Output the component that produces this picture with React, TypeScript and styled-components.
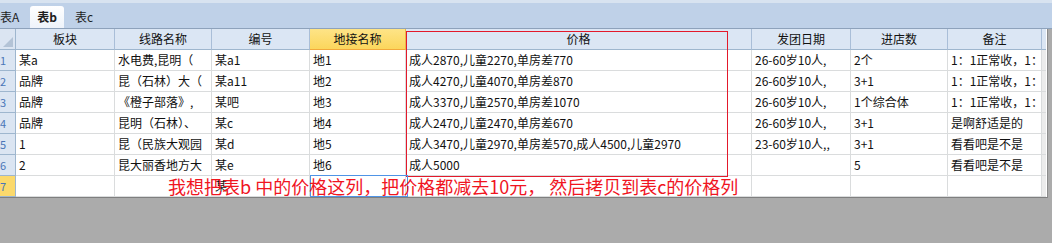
import { FC } from "react";
import styled, { createGlobalStyle } from "styled-components";

const GlobalStyle = createGlobalStyle`
  html, body {
    margin: 0;
    padding: 0;
    background: #ababab;
    font-family: "Noto Sans CJK SC", "Noto Sans", sans-serif;
  }
`;

const colWidths = [99, 97, 98, 96, 346, 99, 97, 94];
const template = `16px ${colWidths.map((w) => `${w}px`).join(" ")} 4px`;

const headers = ["板块", "线路名称", "编号", "地接名称", "价格", "发团日期", "进店数", "备注"];
const selectedCol = 3;
const selectedRow = 6;

const rows: string[][] = [
  ["某a", "水电费,昆明（", "某a1", "地1", "成人2870,儿童2270,单房差770", "26-60岁10人,", "2个", "1：1正常收，1："],
  ["品牌", "昆（石林）大（", "某a11", "地2", "成人4270,儿童4070,单房差870", "26-60岁10人,", "3+1", "1：1正常收，1："],
  ["品牌", "《橙子部落》,", "某吧", "地3", "成人3370,儿童2570,单房差1070", "26-60岁10人,", "1个综合体", "1：1正常收，1："],
  ["品牌", "昆明（石林）、", "某c", "地4", "成人2470,儿童2470,单房差670", "26-60岁10人,", "3+1", "是啊舒适是的"],
  ["1", "昆（民族大观园", "某d", "地5", "成人3470,儿童2970,单房差570,成人4500,儿童2970", "23-60岁10人,,", "3+1", "看看吧是不是"],
  ["2", "昆大丽香地方大", "某e", "地6", "成人5000", "", "5", "看看吧是不是"],
  ["", "", "某", "", "", "", "", ""],
];

const Page = styled.div`
  width: 1052px;
  height: 243px;
  background: #ababab;
  overflow: hidden;
`;

const TabBar = styled.div`
  height: 29px;
  box-sizing: border-box;
  display: flex;
  align-items: flex-end;
  gap: 4px;
  background: #bfd1e8;
  border-top: 3px solid #d8e3f0;
  border-bottom: 1px solid #8ea2bb;
  font-size: 12px;
`;

const Tab = styled.div<{ $active?: boolean }>`
  height: 22px;
  line-height: 22px;
  padding: 0 7px;
  border-radius: 3px 3px 0 0;
  color: #1e1e1e;
  font-weight: ${(p) => (p.$active ? 700 : 400)};
  background: ${(p) => (p.$active ? "linear-gradient(#ffffff, #eef3fa)" : "transparent")};
  &:first-child {
    margin-left: -7px;
  }
`;

const Sheet = styled.div`
  position: relative;
  width: 1047px;
  background: #ffffff;
  border-right: 1px solid #8c8c8c;
  border-bottom: 1px solid #7f7f7f;
  font-size: 12px;
`;

const Row = styled.div`
  display: grid;
  grid-template-columns: ${template};
  height: 21px;
`;

const Corner = styled.div`
  position: relative;
  background: #dbe5f2;
  border-right: 1px solid #9eb6ce;
  border-bottom: 1px solid #9eb6ce;
  &::after {
    content: "";
    position: absolute;
    right: 2px;
    bottom: 2px;
    border-left: 10px solid transparent;
    border-bottom: 10px solid #b3c3d6;
  }
`;

const HeaderCell = styled.div<{ $selected?: boolean }>`
  box-sizing: border-box;
  text-align: center;
  line-height: 20px;
  color: #111;
  white-space: nowrap;
  overflow: hidden;
  background: ${(p) => (p.$selected ? "linear-gradient(#fee487, #fbd65c)" : "#dbe6f4")};
  border-right: 1px solid ${(p) => (p.$selected ? "#e8b64a" : "#a9bed8")};
  border-bottom: 1px solid ${(p) => (p.$selected ? "#f2a93b" : "#9eb6ce")};
`;

const RowHeader = styled.div<{ $selected?: boolean }>`
  box-sizing: border-box;
  line-height: 20px;
  font-size: 11px;
  padding-left: 0;
  color: #4a76b8;
  background: ${(p) => (p.$selected ? "#fbd96c" : "#dbe5f2")};
  border-right: 1px solid #9eb6ce;
  border-bottom: 1px solid #9eb6ce;
`;

const Cell = styled.div`
  box-sizing: border-box;
  padding-left: 3px;
  line-height: 20px;
  color: #111;
  white-space: nowrap;
  overflow: hidden;
  border-right: 1px solid #dadcdd;
  border-bottom: 1px solid #dadcdd;
`;

const Filler = styled.div`
  background: #ececec;
  border-bottom: 1px solid #dadcdd;
`;

const HeaderFiller = styled.div`
  background: #dbe6f4;
  border-bottom: 1px solid #9eb6ce;
`;

const PriceMark = styled.div`
  position: absolute;
  left: 406px;
  top: 2px;
  width: 322px;
  height: 146px;
  box-sizing: border-box;
  border: 1px solid #e3192b;
  pointer-events: none;
`;

const ActiveCell = styled.div`
  position: absolute;
  left: 310px;
  top: 146px;
  width: 98px;
  height: 22px;
  box-sizing: border-box;
  border: 1px solid #4f94e6;
`;

const Note = styled.div`
  position: absolute;
  left: 168px;
  top: 147px;
  font-size: 18px;
  line-height: 20px;
  color: #f0151f;
  white-space: nowrap;
`;

const App: FC = () => {
  return (
    <Page>
      <GlobalStyle />
      <TabBar>
        <Tab>表A</Tab>
        <Tab $active>表b</Tab>
        <Tab>表c</Tab>
      </TabBar>
      <Sheet>
        <Row>
          <Corner />
          {headers.map((h, i) => (
            <HeaderCell key={h} $selected={i === selectedCol}>
              {h}
            </HeaderCell>
          ))}
          <HeaderFiller />
        </Row>
        {rows.map((r, ri) => (
          <Row key={ri}>
            <RowHeader $selected={ri === selectedRow}>{ri + 1}</RowHeader>
            {r.map((v, ci) => (
              <Cell key={ci}>{v}</Cell>
            ))}
            <Filler />
          </Row>
        ))}
        <PriceMark />
        <ActiveCell />
        <Note>我想把表b 中的价格这列，把价格都减去10元， 然后拷贝到表c的价格列</Note>
      </Sheet>
    </Page>
  );
};

export default App;
